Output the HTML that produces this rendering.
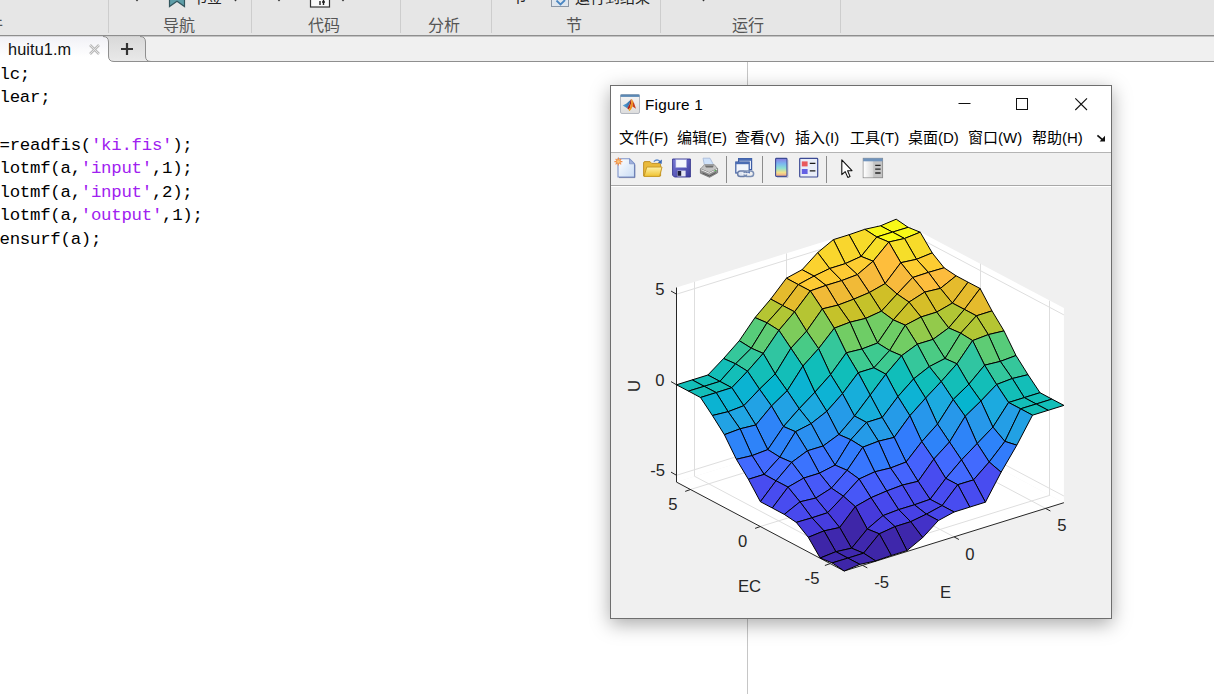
<!DOCTYPE html>
<html><head><meta charset="utf-8"><title>MATLAB Editor - Figure 1</title>
<style>
html,body{margin:0;padding:0;}
body{width:1214px;height:694px;overflow:hidden;background:#fff;position:relative;font-family:"Liberation Sans","Noto Sans CJK SC",sans-serif;}
.abs{position:absolute;}
#strip{left:0;top:0;width:1214px;height:35px;background:#e6e6e6;border-bottom:1px solid #8e8e8e;overflow:hidden;}
#strip .sep{position:absolute;top:0;height:33px;width:1px;background:#cdcdcd;}
#strip .lbl{position:absolute;top:16px;font-size:16px;color:#555;line-height:20px;white-space:nowrap;}
#strip .cut{position:absolute;font-size:15px;color:#222;line-height:16px;white-space:nowrap;}
#tabbar{left:0;top:36px;width:1214px;height:26px;background:#f0f0f0;box-shadow:inset 0 1px 0 #c2c2c2;}
#tab1{left:0;top:36px;width:108px;height:25px;z-index:5;}
#tab1 span{position:absolute;left:8px;top:2.5px;font-size:16.3px;letter-spacing:0.1px;color:#111;line-height:20px;}
#code{left:-10.6px;top:62.9px;font-family:"Liberation Mono",monospace;font-size:17.4px;letter-spacing:-0.28px;line-height:23.6px;color:#000;white-space:pre;margin:0;}
#code .s{color:#a020f0;}
#margin{left:747px;top:62px;width:1px;height:633px;background:#c6c6c6;}
#fig{left:611px;top:86px;width:500px;height:532px;background:#f0f0f0;box-shadow:0 0 0 1px #6e6e6e,0 5px 18px 1px rgba(0,0,0,.34);}
#title{left:0;top:0;width:500px;height:36px;background:#fff;}
#title .t{position:absolute;left:34px;top:9.3px;font-size:15.3px;letter-spacing:0.22px;color:#000;line-height:20px;}
#menu{left:0;top:36px;width:500px;height:30px;background:#fff;border-bottom:1px solid #b4b4b4;}
#menu span{position:absolute;top:6px;font-size:15px;color:#000;line-height:20px;white-space:nowrap;}
#tool{left:0;top:67px;width:500px;height:32px;background:#f0f0f0;border-bottom:1px solid #a8a8a8;}
#toolw{left:0;top:100px;width:500px;height:1px;background:#fff;}
svg text{font-family:"Liberation Sans",sans-serif;}
</style></head><body>
<div id="strip" class="abs">
<div class="sep" style="left:108px"></div><div class="sep" style="left:251px"></div><div class="sep" style="left:400px"></div><div class="sep" style="left:491px"></div><div class="sep" style="left:660px"></div><div class="sep" style="left:840px"></div>
<div class="cut" style="left:-29px;top:17px;font-size:16px;color:#555">文件</div>
<div class="cut" style="left:192px;top:-10.5px">书签</div>
<div class="cut" style="left:512px;top:-11.5px">节</div>
<div class="cut" style="left:575px;top:-10.5px">运行到结束</div>
<div class="lbl" style="left:163px">导航</div>
<div class="lbl" style="left:308px">代码</div>
<div class="lbl" style="left:428px">分析</div>
<div class="lbl" style="left:566px">节</div>
<div class="lbl" style="left:732px">运行</div>
</div>
<div id="tabbar" class="abs"></div>
<div id="tab1" class="abs"><span>huitu1.m</span></div>
<pre id="code" class="abs">clc;
clear;

a=readfis(<span class="s">'ki.fis'</span>);
plotmf(a,<span class="s">'input'</span>,1);
plotmf(a,<span class="s">'input'</span>,2);
plotmf(a,<span class="s">'output'</span>,1);
gensurf(a);</pre>
<div id="margin" class="abs"></div>
<div id="fig" class="abs">
<div id="title" class="abs"><span class="t">Figure 1</span></div>
<div id="menu" class="abs">
<span style="left:8px">文件(F)</span><span style="left:66px">编辑(E)</span><span style="left:124px">查看(V)</span><span style="left:184px">插入(I)</span><span style="left:239px">工具(T)</span><span style="left:297px">桌面(D)</span><span style="left:357px">窗口(W)</span><span style="left:421px">帮助(H)</span>
</div>
<div id="tool" class="abs"></div><div id="toolw" class="abs"></div>
</div>
<svg class="abs" style="left:0;top:0" width="1214" height="694" viewBox="0 0 1214 694">
<defs>
<linearGradient id="gPage" x1="0" y1="0" x2="1" y2="1"><stop offset="0" stop-color="#ffffff"/><stop offset="1" stop-color="#c9dcf5"/></linearGradient>
<linearGradient id="gFold" x1="0" y1="0" x2="0" y2="1"><stop offset="0" stop-color="#fff2a8"/><stop offset="1" stop-color="#efc230"/></linearGradient>
<linearGradient id="gSave" x1="0" y1="0" x2="1" y2="1"><stop offset="0" stop-color="#7a7ad8"/><stop offset="1" stop-color="#3c3c9c"/></linearGradient>
<linearGradient id="gCb" x1="0" y1="0" x2="0" y2="1"><stop offset="0" stop-color="#8a7ae0"/><stop offset="0.3" stop-color="#7ab8f0"/><stop offset="0.55" stop-color="#8ee0d0"/><stop offset="0.78" stop-color="#f2e08a"/><stop offset="1" stop-color="#f0a08a"/></linearGradient>
<linearGradient id="gPane" x1="0" y1="0" x2="1" y2="0"><stop offset="0" stop-color="#ffffff"/><stop offset="1" stop-color="#d8d8d8"/></linearGradient>
<linearGradient id="gIcon" x1="0" y1="0" x2="0" y2="1"><stop offset="0" stop-color="#f6f6f6"/><stop offset="1" stop-color="#dcdcdc"/></linearGradient>
<linearGradient id="gML" x1="0" y1="0" x2="1" y2="0"><stop offset="0" stop-color="#c2261c"/><stop offset="0.5" stop-color="#f39a1e"/><stop offset="1" stop-color="#c43a22"/></linearGradient>
<linearGradient id="gMLb" x1="0" y1="0" x2="1" y2="0"><stop offset="0" stop-color="#5aa6dc"/><stop offset="1" stop-color="#2f6aa6"/></linearGradient>
<linearGradient id="gTab2" x1="0" y1="0" x2="0" y2="1"><stop offset="0" stop-color="#d9d9d9"/><stop offset="1" stop-color="#e9e9e9"/></linearGradient>
<linearGradient id="gTab1" x1="0" y1="0" x2="0" y2="1"><stop offset="0" stop-color="#f1f1f6"/><stop offset="0.8" stop-color="#ffffff"/></linearGradient>
</defs>
<!-- editor tabs -->
<path d="M-2,36.5 L103,36.5 Q108.5,36.5 108.5,42 L108.5,56 Q108.5,61.5 114,61.5 L114,62.5 L-2,62.5 Z" fill="url(#gTab1)"/>
<path d="M103,36.5 Q108.5,36.5 108.5,42 L108.5,56 Q108.5,61.5 114,61.5 L151,61.5 Q145.5,61.5 145.5,56 L145.5,42 Q145.5,36.5 140,36.5 Z" fill="url(#gTab2)"/>
<path d="M103,36.5 Q108.5,36.5 108.5,42 L108.5,56 Q108.5,61.5 114,61.5 L1214,61.5 M140,36.5 Q145.5,36.5 145.5,42 L145.5,56 Q145.5,61.5 151,61.5" fill="none" stroke="#8f8f8f" stroke-width="1"/>
<path d="M121,49 H133 M127,43 V55" stroke="#333" stroke-width="2.2" fill="none"/>
<path d="M90,45 L99,54 M99,45 L90,54" stroke="#b9b9b9" stroke-width="2.5" fill="none"/>
<path d="M90,45 L99,54 M99,45 L90,54" stroke="#ececec" stroke-width="0.8" fill="none"/>
<!-- matlab icon -->
<rect x="620.5" y="94.5" width="19" height="19" rx="1.5" fill="url(#gIcon)" stroke="#b4b8c0"/>
<rect x="620.5" y="94.5" width="19" height="2.4" fill="#5a88b4"/>
<path d="M622.7,105.6 L626.5,103.6 L629.6,100.8 L630.6,99.8 L629.4,104.6 L627.2,108.2 L625.2,107 Z" fill="url(#gMLb)"/>
<path d="M627.2,108.2 L629.4,104.6 L630.6,99.8 L631.4,99 L631.2,103 L629.8,108 L628.6,109.6 Z" fill="#a8261c"/>
<path d="M628.6,109.6 L629.8,108 L631.2,103 L631.4,99 L632.2,99.4 L633.2,102 L632.6,106.4 L631,109.4 L629.2,111 Z" fill="#f0921e"/>
<path d="M629.2,111 L631,109.4 L630,108.6 L628.8,109.8 Z" fill="#f2b21e"/>
<path d="M632.2,99.4 L634.2,103.6 L636,108.8 L634.4,107.8 L632.6,106.4 L633.2,102 Z" fill="#c8401e"/>
<!-- window controls -->
<path d="M958.5,103.5 H970.5" stroke="#111" stroke-width="1"/>
<rect x="1016.5" y="98.5" width="11" height="11" fill="none" stroke="#111" stroke-width="1"/>
<path d="M1075.3,98.3 L1087,110 M1087,98.3 L1075.3,110" stroke="#111" stroke-width="1.1" fill="none"/>
<!-- menu overflow arrow -->
<path d="M1097.4,135.4 L1102.4,139.6" stroke="#111" stroke-width="1.7" fill="none"/>
<path d="M1105,141.4 L1105,135.8 L1099.6,141.4 Z" fill="#111"/>
<!-- toolbar separators -->
<path d="M726.5,156 V183 M762.5,156 V183 M826.5,156 V183" stroke="#8c8c8c" stroke-width="1" fill="none"/>
<!-- new -->
<path d="M618,158.8 L629.5,158.8 L634.5,163.8 L634.5,177 L618,177 Z" fill="url(#gPage)" stroke="#7f93c8" stroke-width="1.1"/>
<path d="M629.5,158.8 L629.5,163.8 L634.5,163.8 Z" fill="#9fb0dc" stroke="#7f93c8" stroke-width="0.8"/>
<path d="M634.9,164.5 V177.6 H619" stroke="#5a6aa0" stroke-width="1" fill="none" opacity=".7"/>
<path d="M618.4,157.6 V165.6 M614.4,161.6 H622.4 M615.6,158.8 L621.2,164.4 M621.2,158.8 L615.6,164.4" stroke="#ee8a4a" stroke-width="1.1"/>
<circle cx="618.4" cy="161.6" r="2.5" fill="#f29a4e"/>
<circle cx="618.4" cy="161.6" r="1.4" fill="#fbc47c"/>
<!-- open -->
<path d="M643.6,176 L643.6,163 Q643.6,161.6 645,161.6 L650,161.6 L651.6,163.4 L659.4,163.4 Q660.6,163.4 660.6,164.8 L660.6,176 Z" fill="#e9b93a" stroke="#c0922a" stroke-width="1"/>
<path d="M644,176.4 L646.8,167 L662,167 L659.6,176.4 Z" fill="url(#gFold)" stroke="#c89a28" stroke-width="1"/>
<path d="M653.8,161.6 Q656.8,158.6 660.2,161.4" fill="none" stroke="#5a88cc" stroke-width="1.3"/>
<path d="M662,159.6 L661.6,164 L657.8,162.4 Z" fill="#3a68b4"/>
<!-- save -->
<path d="M672.6,159 L690.4,159 L690.4,177 L674.4,177 L672.6,175.2 Z" fill="url(#gSave)" stroke="#34348c" stroke-width="0.9"/>
<rect x="675.8" y="159.6" width="10.8" height="8" fill="#f4f6fc" stroke="#9aa0d8" stroke-width="0.6"/>
<rect x="677.4" y="170.6" width="8.2" height="5.8" fill="#e4e6f4"/>
<rect x="677.6" y="171" width="3.6" height="4.8" fill="#1c1c3c"/>
<!-- print -->
<path d="M703,158.2 L710,158.2 L714.2,166 L704.6,166 Z" fill="#cfe2fa" stroke="#a4b8d8" stroke-width="0.8"/>
<path d="M700.4,169 L704.6,164.6 L714.2,164.6 L717.6,168.6 L709.4,172.8 Z" fill="#c4c4c4" stroke="#8a8a8a" stroke-width="0.8"/>
<path d="M704.8,165.6 L713.8,165.6 L712.8,167.6 L706,167.6 Z" fill="#6e6e6e"/>
<path d="M700.4,169 L709.4,172.8 L717.6,168.6 L717.6,172.8 L709.6,177.3 L700.4,173.2 Z" fill="#909090" stroke="#707070" stroke-width="0.8"/>
<path d="M700.8,169.6 L709.4,173.2 L717.2,169.2" fill="none" stroke="#ececec" stroke-width="1"/>
<path d="M702.6,173 L709.5,176 L715.8,172.6" fill="none" stroke="#585858" stroke-width="1"/>
<circle cx="715.2" cy="170.6" r="0.8" fill="#4cae4c"/>
<!-- link -->
<rect x="738.6" y="158.6" width="13" height="11" fill="#e8eefa" stroke="#3c5ca4" stroke-width="1.2"/>
<rect x="738.6" y="158.6" width="13" height="2.2" fill="#4a6cb4"/>
<rect x="735.8" y="162" width="13.4" height="11" fill="#f2f5fc" stroke="#3c5ca4" stroke-width="1.2"/>
<rect x="735.8" y="162" width="13.4" height="2.2" fill="#4a6cb4"/>
<rect x="737.6" y="171" width="9" height="5.6" rx="2.8" fill="#dfe6f2" stroke="#6a7ea8" stroke-width="1.5"/>
<rect x="744" y="171" width="9.6" height="5.6" rx="2.8" fill="none" stroke="#7a8eb4" stroke-width="1.5"/>
<path d="M742,173.8 H749.4" stroke="#f4f6fa" stroke-width="1.3"/>
<!-- colorbar -->
<rect x="775.6" y="158.4" width="11.4" height="18" rx="0.8" fill="url(#gCb)" stroke="#3c4a94" stroke-width="1.1"/>
<path d="M787.9,160 V177.3 H777" stroke="#8890b8" stroke-width="0.8" fill="none" opacity=".7"/>
<!-- legend -->
<rect x="799.7" y="158.4" width="18" height="18.6" rx="0.8" fill="#e9edf8" stroke="#3c4a94" stroke-width="1.2"/>
<rect x="801.8" y="161.4" width="5.8" height="5" fill="#e8585c"/>
<rect x="801.8" y="169" width="5.8" height="5" fill="#6460e4"/>
<path d="M809.8,163.4 H815.4 M809.8,170.8 H815.4" stroke="#1a1a1a" stroke-width="1.3"/>
<!-- pointer -->
<path d="M841.8,159.8 L841.8,174.6 L845.2,171.6 L847.8,177.4 L850,176.4 L847.6,170.8 L852,170.6 Z" fill="#fff" stroke="#111" stroke-width="1.1" stroke-linejoin="round"/>
<!-- property panel -->
<rect x="863.2" y="158.3" width="19.4" height="19.4" fill="#c4c4c4" stroke="#8c8c8c" stroke-width="0.9"/>
<rect x="863.6" y="161" width="9.6" height="16.3" fill="url(#gPane)"/>
<rect x="863.2" y="158.3" width="19.4" height="3" fill="#6f93bc"/>
<path d="M875.2,165.4 H880.6 M875.2,169.2 H880.6 M875.2,173 H880.6" stroke="#262626" stroke-width="1.3"/>
<!-- ribbon cut-off icons -->
<path d="M169.5,-2 H184.5 V6.6 L177,1.2 L169.5,6.6 Z" fill="#5f9ea8" stroke="#33565e" stroke-width="1.2"/>
<rect x="310.5" y="-6" width="19" height="13" fill="#fafafa" stroke="#333" stroke-width="1.2"/>
<path d="M320,1 V5 M323.5,0 V5 M322,2 H325" stroke="#222" stroke-width="1.4"/>
<rect x="551.5" y="-6" width="17" height="12.5" fill="#dfe6ee" stroke="#8a96a6" stroke-width="1"/>
<path d="M556.5,0.5 L560.5,4.5 L565,0" stroke="#4a86c2" stroke-width="1.8" fill="none"/><path d="M554,-3 H566" stroke="#a8b4c4" stroke-width="1"/>
<path d="M134.5,-1.5 h5 l-2.5,3 Z M233,-1.5 h5 l-2.5,3 Z M276.5,-1.5 h5 l-2.5,3 Z M340.5,-1.5 h5 l-2.5,3 Z M701,-1.5 h5 l-2.5,3 Z" fill="#333"/>

<polygon points="844.2,571.0 1063.9,502.7 896.2,413.8 676.5,482.1" fill="#fff"/>
<polygon points="676.5,482.1 896.2,413.8 896.2,219.2 676.5,287.5" fill="#fff"/>
<polygon points="1063.9,502.7 896.2,413.8 896.2,219.2 1063.9,308.1" fill="#fff"/>
<path d="M862.5,565.3 L694.8,476.4 M830.2,563.6 L1049.9,495.3 M694.5,476.4 L694.5,281.8 M676.5,475.3 L896.2,407.1 M1049.5,495.3 L1049.5,300.7 M1063.9,496.0 L896.2,407.1 M954.1,536.9 L786.4,447.9 M760.4,526.5 L980.1,458.3 M786.5,447.9 L786.5,253.4 M676.5,384.8 L896.2,316.5 M980.5,458.3 L980.5,263.7 M1063.9,405.4 L896.2,316.5 M1045.6,508.4 L877.9,419.5 M690.5,489.5 L910.2,421.2 M877.5,419.5 L877.5,224.9 M676.5,294.2 L896.2,226.0 M910.5,421.2 L910.5,226.6 M1063.9,314.9 L896.2,226.0" stroke="#dedede" stroke-width="1" fill="none"/>
<path d="M676.5,482.1 L676.5,287.5 M844.2,571.0 L676.5,482.1 M844.2,571.0 L1063.9,502.7 M676.5,475.3 L671.0,472.1 M830.2,563.6 L824.9,565.5 M862.5,565.3 L867.3,567.9 M676.5,384.8 L671.0,381.6 M760.4,526.5 L755.1,528.4 M954.1,536.9 L958.9,539.5 M676.5,294.2 L671.0,291.0 M690.5,489.5 L685.2,491.4 M1045.6,508.4 L1050.4,511.0" stroke="#262626" stroke-width="1" fill="none"/>
<g stroke="#000" stroke-width="1" stroke-linejoin="round">
<polygon points="892.5,232.1 908.2,227.3 896.2,219.2 880.5,225.8" fill="#f8f818"/>
<polygon points="876.8,237.0 892.5,232.1 880.5,225.8 864.8,229.3" fill="#f8f818"/>
<polygon points="904.5,238.5 920.2,232.2 908.2,227.3 892.5,232.1" fill="#f8f818"/>
<polygon points="861.1,256.4 876.8,237.0 864.8,229.3 849.1,234.7" fill="#f7db2a"/>
<polygon points="888.8,242.0 904.5,238.5 892.5,232.1 876.8,237.0" fill="#f9fb15"/>
<polygon points="916.5,259.3 932.2,252.9 920.2,232.2 904.5,238.5" fill="#f7db2a"/>
<polygon points="845.4,263.6 861.1,256.4 849.1,234.7 833.4,239.6" fill="#f9d62d"/>
<polygon points="873.1,261.2 888.8,242.0 876.8,237.0 861.1,256.4" fill="#f6de29"/>
<polygon points="900.8,262.7 916.5,259.3 904.5,238.5 888.8,242.0" fill="#f6de29"/>
<polygon points="928.4,272.4 944.1,267.8 932.2,252.9 916.5,259.3" fill="#fdcd32"/>
<polygon points="829.7,268.5 845.4,263.6 833.4,239.6 817.7,252.6" fill="#f9d62d"/>
<polygon points="857.4,274.6 873.1,261.2 861.1,256.4 845.4,263.6" fill="#fdcd32"/>
<polygon points="885.1,283.6 900.8,262.7 888.8,242.0 873.1,261.2" fill="#febe3c"/>
<polygon points="912.7,277.5 928.4,272.4 916.5,259.3 900.8,262.7" fill="#fdcd32"/>
<polygon points="814.0,276.1 829.7,268.5 817.7,252.6 802.1,269.7" fill="#fbd22f"/>
<polygon points="940.4,288.4 956.1,275.8 944.1,267.8 928.4,272.4" fill="#fcbc3d"/>
<polygon points="841.7,280.6 857.4,274.6 845.4,263.6 829.7,268.5" fill="#feca33"/>
<polygon points="869.4,292.5 885.1,283.6 873.1,261.2 857.4,274.6" fill="#f7ba3c"/>
<polygon points="897.1,294.0 912.7,277.5 900.8,262.7 885.1,283.6" fill="#f7ba3c"/>
<polygon points="798.3,284.6 814.0,276.1 802.1,269.7 786.4,278.2" fill="#feca33"/>
<polygon points="924.7,292.1 940.4,288.4 928.4,272.4 912.7,277.5" fill="#fdbd3d"/>
<polygon points="826.0,285.4 841.7,280.6 829.7,268.5 814.0,276.1" fill="#fdcb32"/>
<polygon points="952.4,303.1 968.1,282.2 956.1,275.8 940.4,288.4" fill="#e5bb2d"/>
<polygon points="853.7,299.2 869.4,292.5 857.4,274.6 841.7,280.6" fill="#f1ba37"/>
<polygon points="881.4,311.2 897.1,294.0 885.1,283.6 869.4,292.5" fill="#d0bf27"/>
<polygon points="782.6,305.5 798.3,284.6 786.4,278.2 770.7,299.1" fill="#e5bb2d"/>
<polygon points="909.0,302.1 924.7,292.1 912.7,277.5 897.1,294.0" fill="#f1ba37"/>
<polygon points="810.3,290.9 826.0,285.4 814.0,276.1 798.3,284.6" fill="#feca33"/>
<polygon points="936.7,312.1 952.4,303.1 940.4,288.4 924.7,292.1" fill="#d6be28"/>
<polygon points="838.0,305.1 853.7,299.2 841.7,280.6 826.0,285.4" fill="#efba35"/>
<polygon points="964.4,309.4 980.1,288.5 968.1,282.2 952.4,303.1" fill="#e5bb2d"/>
<polygon points="865.7,318.4 881.4,311.2 869.4,292.5 853.7,299.2" fill="#c5c22a"/>
<polygon points="767.0,322.8 782.6,305.5 770.7,299.1 755.0,317.6" fill="#b5c533"/>
<polygon points="893.3,319.9 909.0,302.1 897.1,294.0 881.4,311.2" fill="#c5c22a"/>
<polygon points="794.6,311.8 810.3,290.9 798.3,284.6 782.6,305.5" fill="#e5bb2d"/>
<polygon points="921.0,317.0 936.7,312.1 924.7,292.1 909.0,302.1" fill="#d6be28"/>
<polygon points="822.3,308.9 838.0,305.1 826.0,285.4 810.3,290.9" fill="#f1ba37"/>
<polygon points="948.7,327.9 964.4,309.4 952.4,303.1 936.7,312.1" fill="#b1c635"/>
<polygon points="850.0,322.2 865.7,318.4 853.7,299.2 838.0,305.1" fill="#cac129"/>
<polygon points="751.3,348.2 767.0,322.8 755.0,317.6 739.3,340.7" fill="#57cc7a"/>
<polygon points="976.4,315.8 992.0,310.9 980.1,288.5 964.4,309.4" fill="#e5bb2d"/>
<polygon points="877.6,343.0 893.3,319.9 881.4,311.2 865.7,318.4" fill="#72cd64"/>
<polygon points="778.9,330.3 794.6,311.8 782.6,305.5 767.0,322.8" fill="#b1c635"/>
<polygon points="905.3,325.2 921.0,317.0 909.0,302.1 893.3,319.9" fill="#cac129"/>
<polygon points="806.6,331.1 822.3,308.9 810.3,290.9 794.6,311.8" fill="#b5c533"/>
<polygon points="933.0,339.4 948.7,327.9 936.7,312.1 921.0,317.0" fill="#93ca4b"/>
<polygon points="834.3,328.2 850.0,322.2 838.0,305.1 822.3,308.9" fill="#c5c22a"/>
<polygon points="735.6,363.8 751.3,348.2 739.3,340.7 723.6,358.5" fill="#35c79b"/>
<polygon points="960.7,333.2 976.4,315.8 964.4,309.4 948.7,327.9" fill="#b5c533"/>
<polygon points="861.9,349.0 877.6,343.0 865.7,318.4 850.0,322.2" fill="#6ecd66"/>
<polygon points="763.2,353.4 778.9,330.3 767.0,322.8 751.3,348.2" fill="#5ecc74"/>
<polygon points="988.3,334.6 1004.0,330.9 992.0,310.9 976.4,315.8" fill="#b5c533"/>
<polygon points="889.6,350.5 905.3,325.2 893.3,319.9 877.6,343.0" fill="#6ecd66"/>
<polygon points="790.9,348.2 806.6,331.1 794.6,311.8 778.9,330.3" fill="#7dcc5b"/>
<polygon points="917.3,344.2 933.0,339.4 921.0,317.0 905.3,325.2" fill="#93ca4b"/>
<polygon points="818.6,348.6 834.3,328.2 822.3,308.9 806.6,331.1" fill="#81cc59"/>
<polygon points="719.9,381.4 735.6,363.8 723.6,358.5 707.9,375.0" fill="#13beb8"/>
<polygon points="945.0,358.5 960.7,333.2 948.7,327.9 933.0,339.4" fill="#57cc7a"/>
<polygon points="846.3,352.8 861.9,349.0 850.0,322.2 834.3,328.2" fill="#72cd64"/>
<polygon points="747.5,371.2 763.2,353.4 751.3,348.2 735.6,363.8" fill="#33c79d"/>
<polygon points="972.6,340.6 988.3,334.6 976.4,315.8 960.7,333.2" fill="#b1c635"/>
<polygon points="873.9,367.8 889.6,350.5 877.6,343.0 861.9,349.0" fill="#3eca90"/>
<polygon points="775.2,373.9 790.9,348.2 778.9,330.3 763.2,353.4" fill="#30c5a1"/>
<polygon points="1000.3,361.4 1016.0,355.5 1004.0,330.9 988.3,334.6" fill="#57cc7a"/>
<polygon points="901.6,355.7 917.3,344.2 905.3,325.2 889.6,350.5" fill="#72cd64"/>
<polygon points="802.9,366.1 818.6,348.6 806.6,331.1 790.9,348.2" fill="#48cb86"/>
<polygon points="704.2,386.3 719.9,381.4 707.9,375.0 692.2,379.9" fill="#13beb8"/>
<polygon points="929.3,366.6 945.0,358.5 933.0,339.4 917.3,344.2" fill="#4bcb84"/>
<polygon points="830.6,374.5 846.3,352.8 834.3,328.2 818.6,348.6" fill="#35c79b"/>
<polygon points="731.8,387.7 747.5,371.2 735.6,363.8 719.9,381.4" fill="#13beb8"/>
<polygon points="956.9,363.8 972.6,340.6 960.7,333.2 945.0,358.5" fill="#5ecc74"/>
<polygon points="858.2,372.7 873.9,367.8 861.9,349.0 846.3,352.8" fill="#3eca90"/>
<polygon points="759.5,389.2 775.2,373.9 763.2,353.4 747.5,371.2" fill="#13beb8"/>
<polygon points="984.6,365.2 1000.3,361.4 988.3,334.6 972.6,340.6" fill="#5ecc74"/>
<polygon points="885.9,374.2 901.6,355.7 889.6,350.5 873.9,367.8" fill="#3eca90"/>
<polygon points="787.2,390.7 802.9,366.1 790.9,348.2 775.2,373.9" fill="#13beb8"/>
<polygon points="688.5,391.1 704.2,386.3 692.2,379.9 676.5,384.8" fill="#13beb8"/>
<polygon points="1012.3,378.5 1028.0,374.7 1016.0,355.5 1000.3,361.4" fill="#35c79b"/>
<polygon points="913.6,378.9 929.3,366.6 917.3,344.2 901.6,355.7" fill="#35c79b"/>
<polygon points="814.9,392.2 830.6,374.5 818.6,348.6 802.9,366.1" fill="#10beba"/>
<polygon points="716.2,392.6 731.8,387.7 719.9,381.4 704.2,386.3" fill="#13beb8"/>
<polygon points="941.2,381.5 956.9,363.8 945.0,358.5 929.3,366.6" fill="#33c79d"/>
<polygon points="842.5,393.6 858.2,372.7 846.3,352.8 830.6,374.5" fill="#10beba"/>
<polygon points="743.8,405.7 759.5,389.2 747.5,371.2 731.8,387.7" fill="#0bb3d2"/>
<polygon points="968.9,384.2 984.6,365.2 972.6,340.6 956.9,363.8" fill="#30c5a1"/>
<polygon points="870.2,395.1 885.9,374.2 873.9,367.8 858.2,372.7" fill="#13beb8"/>
<polygon points="771.5,406.0 787.2,390.7 775.2,373.9 759.5,389.2" fill="#06b5cf"/>
<polygon points="996.6,384.5 1012.3,378.5 1000.3,361.4 984.6,365.2" fill="#33c79d"/>
<polygon points="897.9,396.6 913.6,378.9 901.6,355.7 885.9,374.2" fill="#10beba"/>
<polygon points="799.2,408.7 814.9,392.2 802.9,366.1 787.2,390.7" fill="#0bb3d2"/>
<polygon points="700.5,397.5 716.2,392.6 704.2,386.3 688.5,391.1" fill="#13beb8"/>
<polygon points="1024.3,397.6 1040.0,392.7 1028.0,374.7 1012.3,378.5" fill="#13beb8"/>
<polygon points="925.6,398.1 941.2,381.5 929.3,366.6 913.6,378.9" fill="#10beba"/>
<polygon points="826.8,411.3 842.5,393.6 830.6,374.5 814.9,392.2" fill="#0db3d4"/>
<polygon points="728.1,411.7 743.8,405.7 731.8,387.7 716.2,392.6" fill="#0db3d4"/>
<polygon points="953.2,399.5 968.9,384.2 956.9,363.8 941.2,381.5" fill="#13beb8"/>
<polygon points="854.5,416.0 870.2,395.1 858.2,372.7 842.5,393.6" fill="#17aeda"/>
<polygon points="755.8,425.0 771.5,406.0 759.5,389.2 743.8,405.7" fill="#22a2e4"/>
<polygon points="980.9,401.0 996.6,384.5 984.6,365.2 968.9,384.2" fill="#13beb8"/>
<polygon points="882.2,417.5 897.9,396.6 885.9,374.2 870.2,395.1" fill="#17aeda"/>
<polygon points="783.5,426.5 799.2,408.7 787.2,390.7 771.5,406.0" fill="#22a2e4"/>
<polygon points="1008.6,402.5 1024.3,397.6 1012.3,378.5 996.6,384.5" fill="#13beb8"/>
<polygon points="909.9,415.7 925.6,398.1 913.6,378.9 897.9,396.6" fill="#0db3d4"/>
<polygon points="811.1,423.6 826.8,411.3 814.9,392.2 799.2,408.7" fill="#1da9e0"/>
<polygon points="712.4,415.5 728.1,411.7 716.2,392.6 700.5,397.5" fill="#0bb3d2"/>
<polygon points="1036.2,404.0 1051.9,399.1 1040.0,392.7 1024.3,397.6" fill="#13beb8"/>
<polygon points="937.5,424.1 953.2,399.5 941.2,381.5 925.6,398.1" fill="#1caadf"/>
<polygon points="838.8,434.5 854.5,416.0 842.5,393.6 826.8,411.3" fill="#259be8"/>
<polygon points="740.1,428.8 755.8,425.0 743.8,405.7 728.1,411.7" fill="#20a5e3"/>
<polygon points="965.2,416.3 980.9,401.0 968.9,384.2 953.2,399.5" fill="#06b5cf"/>
<polygon points="866.5,422.4 882.2,417.5 870.2,395.1 854.5,416.0" fill="#17aeda"/>
<polygon points="767.8,449.6 783.5,426.5 771.5,406.0 755.8,425.0" fill="#2e84f8"/>
<polygon points="992.9,427.1 1008.6,402.5 996.6,384.5 980.9,401.0" fill="#1caadf"/>
<polygon points="894.2,437.4 909.9,415.7 897.9,396.6 882.2,417.5" fill="#259be8"/>
<polygon points="795.5,431.7 811.1,423.6 799.2,408.7 783.5,426.5" fill="#20a5e3"/>
<polygon points="1020.6,408.8 1036.2,404.0 1024.3,397.6 1008.6,402.5" fill="#13beb8"/>
<polygon points="921.8,441.6 937.5,424.1 925.6,398.1 909.9,415.7" fill="#2797eb"/>
<polygon points="823.1,446.0 838.8,434.5 826.8,411.3 811.1,423.6" fill="#2b90f0"/>
<polygon points="724.4,434.7 740.1,428.8 728.1,411.7 712.4,415.5" fill="#22a2e4"/>
<polygon points="1048.2,410.3 1063.9,405.4 1051.9,399.1 1036.2,404.0" fill="#13beb8"/>
<polygon points="949.5,442.0 965.2,416.3 953.2,399.5 937.5,424.1" fill="#2798ea"/>
<polygon points="850.8,439.7 866.5,422.4 854.5,416.0 838.8,434.5" fill="#259ce7"/>
<polygon points="752.1,455.6 767.8,449.6 755.8,425.0 740.1,428.8" fill="#2e83f9"/>
<polygon points="977.2,443.5 992.9,427.1 980.9,401.0 965.2,416.3" fill="#2798ea"/>
<polygon points="878.5,441.2 894.2,437.4 882.2,417.5 866.5,422.4" fill="#259ce7"/>
<polygon points="779.8,457.1 795.5,431.7 783.5,426.5 767.8,449.6" fill="#2e83f9"/>
<polygon points="1004.9,441.4 1020.6,408.8 1008.6,402.5 992.9,427.1" fill="#249ee6"/>
<polygon points="906.1,462.0 921.8,441.6 909.9,415.7 894.2,437.4" fill="#327cfc"/>
<polygon points="807.4,450.8 823.1,446.0 811.1,423.6 795.5,431.7" fill="#2b90f0"/>
<polygon points="1032.5,415.2 1048.2,410.3 1036.2,404.0 1020.6,408.8" fill="#13beb8"/>
<polygon points="933.8,459.1 949.5,442.0 937.5,424.1 921.8,441.6" fill="#2e83f9"/>
<polygon points="835.1,465.1 850.8,439.7 838.8,434.5 823.1,446.0" fill="#3579fd"/>
<polygon points="736.4,459.3 752.1,455.6 740.1,428.8 724.4,434.7" fill="#2e84f8"/>
<polygon points="961.5,459.9 977.2,443.5 965.2,416.3 949.5,442.0" fill="#2e84f8"/>
<polygon points="862.8,447.2 878.5,441.2 866.5,422.4 850.8,439.7" fill="#259be8"/>
<polygon points="764.1,474.4 779.8,457.1 767.8,449.6 752.1,455.6" fill="#426afe"/>
<polygon points="989.2,462.0 1004.9,441.4 992.9,427.1 977.2,443.5" fill="#2e83f9"/>
<polygon points="890.5,468.0 906.1,462.0 894.2,437.4 878.5,441.2" fill="#3579fd"/>
<polygon points="791.7,462.3 807.4,450.8 795.5,431.7 779.8,457.1" fill="#2e84f8"/>
<polygon points="1016.8,445.2 1032.5,415.2 1020.6,408.8 1004.9,441.4" fill="#22a1e4"/>
<polygon points="918.1,481.3 933.8,459.1 921.8,441.6 906.1,462.0" fill="#4562fc"/>
<polygon points="819.4,473.2 835.1,465.1 823.1,446.0 807.4,450.8" fill="#3b73fe"/>
<polygon points="945.8,478.4 961.5,459.9 949.5,442.0 933.8,459.1" fill="#426afe"/>
<polygon points="847.1,470.3 862.8,447.2 850.8,439.7 835.1,465.1" fill="#327cfc"/>
<polygon points="748.4,479.3 764.1,474.4 752.1,455.6 736.4,459.3" fill="#426afe"/>
<polygon points="973.5,479.9 989.2,462.0 977.2,443.5 961.5,459.9" fill="#426afe"/>
<polygon points="874.8,471.8 890.5,468.0 878.5,441.2 862.8,447.2" fill="#327cfc"/>
<polygon points="776.0,480.8 791.7,462.3 779.8,457.1 764.1,474.4" fill="#426afe"/>
<polygon points="1001.1,472.2 1016.8,445.2 1004.9,441.4 989.2,462.0" fill="#327cfc"/>
<polygon points="902.4,485.1 918.1,481.3 906.1,462.0 890.5,468.0" fill="#4564fd"/>
<polygon points="803.7,478.1 819.4,473.2 807.4,450.8 791.7,462.3" fill="#3b73fe"/>
<polygon points="930.1,499.3 945.8,478.4 933.8,459.1 918.1,481.3" fill="#484cf0"/>
<polygon points="831.4,488.1 847.1,470.3 835.1,465.1 819.4,473.2" fill="#4562fc"/>
<polygon points="957.8,484.7 973.5,479.9 961.5,459.9 945.8,478.4" fill="#426afe"/>
<polygon points="859.1,479.0 874.8,471.8 862.8,447.2 847.1,470.3" fill="#3876fe"/>
<polygon points="760.4,501.7 776.0,480.8 764.1,474.4 748.4,479.3" fill="#484cf0"/>
<polygon points="985.4,502.2 1001.1,472.2 989.2,462.0 973.5,479.9" fill="#484cf0"/>
<polygon points="886.7,491.0 902.4,485.1 890.5,468.0 874.8,471.8" fill="#4562fc"/>
<polygon points="788.0,487.1 803.7,478.1 791.7,462.3 776.0,480.8" fill="#426afe"/>
<polygon points="914.4,504.8 930.1,499.3 918.1,481.3 902.4,485.1" fill="#484bee"/>
<polygon points="815.7,498.1 831.4,488.1 819.4,473.2 803.7,478.1" fill="#4759f8"/>
<polygon points="942.1,505.6 957.8,484.7 945.8,478.4 930.1,499.3" fill="#484cf0"/>
<polygon points="843.4,496.2 859.1,479.0 847.1,470.3 831.4,488.1" fill="#465efb"/>
<polygon points="969.8,507.1 985.4,502.2 973.5,479.9 957.8,484.7" fill="#484cf0"/>
<polygon points="871.0,497.7 886.7,491.0 874.8,471.8 859.1,479.0" fill="#465efb"/>
<polygon points="772.3,508.0 788.0,487.1 776.0,480.8 760.4,501.7" fill="#484cf0"/>
<polygon points="898.7,509.6 914.4,504.8 902.4,485.1 886.7,491.0" fill="#484cf0"/>
<polygon points="800.0,501.8 815.7,498.1 803.7,478.1 788.0,487.1" fill="#475af9"/>
<polygon points="926.4,514.1 942.1,505.6 930.1,499.3 914.4,504.8" fill="#4745e9"/>
<polygon points="827.7,512.7 843.4,496.2 831.4,488.1 815.7,498.1" fill="#4849ed"/>
<polygon points="954.1,512.0 969.8,507.1 957.8,484.7 942.1,505.6" fill="#484cf0"/>
<polygon points="855.3,506.6 871.0,497.7 859.1,479.0 843.4,496.2" fill="#4757f7"/>
<polygon points="883.0,515.6 898.7,509.6 886.7,491.0 871.0,497.7" fill="#4849ed"/>
<polygon points="784.3,514.4 800.0,501.8 788.0,487.1 772.3,508.0" fill="#484cf0"/>
<polygon points="910.7,521.7 926.4,514.1 914.4,504.8 898.7,509.6" fill="#4741e5"/>
<polygon points="812.0,517.8 827.7,512.7 815.7,498.1 800.0,501.8" fill="#4849ed"/>
<polygon points="938.4,520.5 954.1,512.0 942.1,505.6 926.4,514.1" fill="#4745e9"/>
<polygon points="839.7,527.5 855.3,506.6 843.4,496.2 827.7,512.7" fill="#463adb"/>
<polygon points="867.3,529.0 883.0,515.6 871.0,497.7 855.3,506.6" fill="#463adb"/>
<polygon points="895.0,526.6 910.7,521.7 898.7,509.6 883.0,515.6" fill="#4741e5"/>
<polygon points="796.3,522.4 812.0,517.8 800.0,501.8 784.3,514.4" fill="#4849ed"/>
<polygon points="922.7,537.6 938.4,520.5 926.4,514.1 910.7,521.7" fill="#4331c8"/>
<polygon points="824.0,530.9 839.7,527.5 827.7,512.7 812.0,517.8" fill="#463ddf"/>
<polygon points="851.6,548.2 867.3,529.0 855.3,506.6 839.7,527.5" fill="#3e26a8"/>
<polygon points="879.3,533.8 895.0,526.6 883.0,515.6 867.3,529.0" fill="#463ddf"/>
<polygon points="907.0,550.6 922.7,537.6 910.7,521.7 895.0,526.6" fill="#3e27ab"/>
<polygon points="808.3,537.3 824.0,530.9 812.0,517.8 796.3,522.4" fill="#463adb"/>
<polygon points="835.9,551.7 851.6,548.2 839.7,527.5 824.0,530.9" fill="#3f28ae"/>
<polygon points="863.6,553.2 879.3,533.8 867.3,529.0 851.6,548.2" fill="#3f28ae"/>
<polygon points="891.3,555.5 907.0,550.6 895.0,526.6 879.3,533.8" fill="#3e27ab"/>
<polygon points="820.2,558.0 835.9,551.7 824.0,530.9 808.3,537.3" fill="#3e26a8"/>
<polygon points="847.9,558.1 863.6,553.2 851.6,548.2 835.9,551.7" fill="#3f28ae"/>
<polygon points="875.6,560.9 891.3,555.5 879.3,533.8 863.6,553.2" fill="#3e26a8"/>
<polygon points="832.2,562.9 847.9,558.1 835.9,551.7 820.2,558.0" fill="#3f28ae"/>
<polygon points="859.9,564.4 875.6,560.9 863.6,553.2 847.9,558.1" fill="#3f28ae"/>
<polygon points="844.2,571.0 859.9,564.4 847.9,558.1 832.2,562.9" fill="#3e26a8"/>
</g>
<g font-size="16.67" fill="#262626" text-anchor="middle">
<text x="660" y="295">5</text>
<text x="659.8" y="386.4">0</text>
<text x="657.6" y="476.2">-5</text>
<text x="672.8" y="510">5</text>
<text x="742.7" y="547">0</text>
<text x="812" y="584">-5</text>
<text x="881.7" y="588">-5</text>
<text x="970" y="560">0</text>
<text x="1061.8" y="531">5</text>
<text x="749.5" y="592">EC</text>
<text x="945.6" y="598">E</text>
<text transform="translate(640,386) rotate(-90)" x="0" y="0">U</text>
</g>
</svg>
</body></html>
